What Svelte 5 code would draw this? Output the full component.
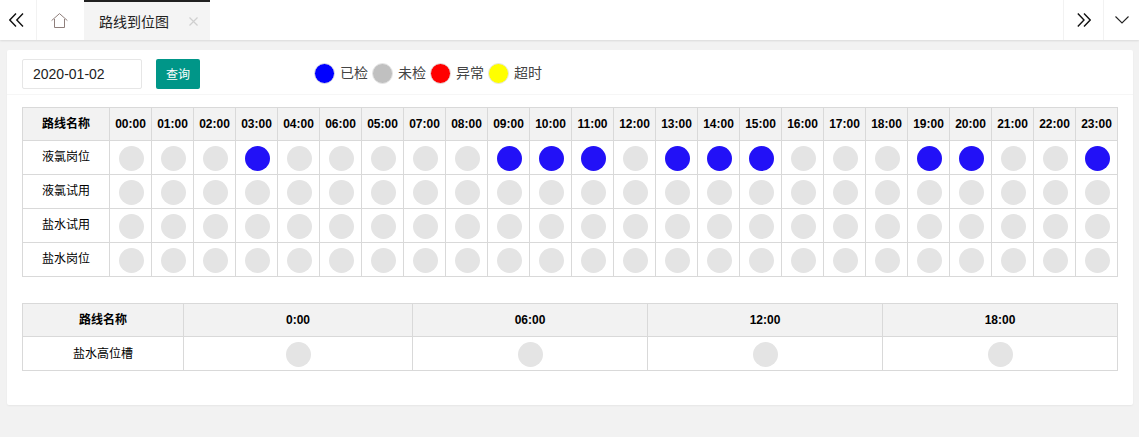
<script>
  const hours = ['00:00','01:00','02:00','03:00','04:00','06:00','05:00','07:00','08:00','09:00','10:00','11:00','12:00','13:00','14:00','15:00','16:00','17:00','18:00','19:00','20:00','21:00','22:00','23:00'];
  const checked = [3, 9, 10, 11, 13, 14, 15, 19, 20, 23];
  const routes = [
    { name: '液氯岗位', done: checked },
    { name: '液氯试用', done: [] },
    { name: '盐水试用', done: [] },
    { name: '盐水岗位', done: [] }
  ];
  const legend = [
    { label: '已检', color: '#0000ff' },
    { label: '未检', color: '#c0c0c0' },
    { label: '异常', color: '#ff0000' },
    { label: '超时', color: '#ffff00' }
  ];
  const shifts = ['0:00', '06:00', '12:00', '18:00'];
</script>

<div class="page">
  <header class="topbar">
    <button class="nav first" aria-label="向左">
      <svg width="15" height="14" viewBox="0 0 15 14"><path d="M7 0.5 L0.8 7 L7 13.5 M14 0.5 L7.8 7 L14 13.5" fill="none" stroke="#111" stroke-width="1.4"/></svg>
    </button>
    <button class="nav home" aria-label="首页">
      <svg width="17" height="15" viewBox="0 0 17 15"><path d="M0.6 7.6 L8.5 0.6 L16.4 7.6 M3.5 6 V14.5 H13.5 V6" fill="none" stroke="#8f7f7c" stroke-width="1"/></svg>
    </button>
    <div class="tab">
      <span>路线到位图</span>
      <svg width="9" height="9" viewBox="0 0 9 9"><path d="M0.5 0.5 L8.5 8.5 M8.5 0.5 L0.5 8.5" stroke="#cfcfcf" stroke-width="1.2"/></svg>
    </div>
    <div class="spacer"></div>
    <button class="nav right" aria-label="向右">
      <svg width="14" height="14" viewBox="0 0 14 14"><path d="M0.8 0.5 L7 7 L0.8 13.5 M7 0.5 L13.2 7 L7 13.5" fill="none" stroke="#111" stroke-width="1.4"/></svg>
    </button>
    <button class="nav more" aria-label="更多">
      <svg width="14" height="8" viewBox="0 0 14 8"><path d="M0.5 0.5 L7 7 L13.5 0.5" fill="none" stroke="#222" stroke-width="1.1"/></svg>
    </button>
  </header>

  <main class="card">
    <div class="toolbar">
      <input class="date" value="2020-01-02" />
      <button class="query">查询</button>
      <div class="legend">
        {#each legend as item}
          <i class="swatch" style="background: {item.color}"></i>
          <span>{item.label}</span>
        {/each}
      </div>
    </div>

    <div class="body">
      <table class="hours">
        <thead>
          <tr>
            <th class="name">路线名称</th>
            {#each hours as h}<th>{h}</th>{/each}
          </tr>
        </thead>
        <tbody>
          {#each routes as route}
            <tr>
              <td class="label">{route.name}</td>
              {#each hours as h, i}
                <td class="slot"><i class="dot" class:on={route.done.includes(i)}></i></td>
              {/each}
            </tr>
          {/each}
        </tbody>
      </table>

      <table class="shifts">
        <thead>
          <tr>
            <th class="s0">路线名称</th>
            <th class="s1">{shifts[0]}</th>
            <th class="s2">{shifts[1]}</th>
            <th class="s2">{shifts[2]}</th>
            <th>{shifts[3]}</th>
          </tr>
        </thead>
        <tbody>
          <tr>
            <td>盐水高位槽</td>
            {#each shifts as s}
              <td><i class="dot"></i></td>
            {/each}
          </tr>
        </tbody>
      </table>
    </div>
  </main>
</div>

<style>
  :global(body) {
    margin: 0;
    background: #f2f2f2;
    font-family: "Liberation Sans", "Noto Sans CJK SC", sans-serif;
    color: #000;
  }

  .page {
    height: 437px;
    overflow: hidden;
    background: #f2f2f2;
  }

  .topbar {
    display: flex;
    height: 40px;
    background: #fff;
    box-shadow: 0 1px 2px rgba(0, 0, 0, 0.1);
  }

  .nav {
    display: flex;
    align-items: center;
    justify-content: center;
    padding: 0;
    border: 0;
    background: #fff;
    height: 40px;
  }

  .first {
    width: 37px;
    border-right: 1px solid #f2f2f2;
    padding-right: 3px;
  }

  .home {
    width: 47px;
    padding-right: 2px;
  }

  .tab {
    display: flex;
    align-items: center;
    box-sizing: border-box;
    width: 126px;
    height: 40px;
    padding: 0 12px 0 15px;
    justify-content: space-between;
    background: #f4f4f4;
    border-top: 2px solid #202020;
    font-size: 14px;
    color: #222;
  }

  .spacer {
    flex: 1;
  }

  .right {
    width: 40px;
    border-left: 1px solid #f2f2f2;
  }

  .more {
    width: 36px;
    border-left: 1px solid #f2f2f2;
  }

  .card {
    box-sizing: border-box;
    height: 355px;
    margin: 10px 6px 0 7px;
    background: #fff;
    border-radius: 2px;
    box-shadow: 0 1px 2px rgba(0, 0, 0, 0.05);
  }

  .toolbar {
    display: flex;
    align-items: center;
    box-sizing: border-box;
    height: 45px;
    padding: 3px 15px 0;
    border-bottom: 1px solid #f6f6f6;
  }

  .date {
    box-sizing: border-box;
    width: 120px;
    height: 30px;
    padding: 0 10px;
    border: 1px solid #e6e6e6;
    border-radius: 2px;
    font: 14px "Liberation Sans", "Noto Sans CJK SC", sans-serif;
    color: #222;
    outline: none;
  }

  .query {
    width: 44px;
    height: 30px;
    margin-left: 14px;
    padding: 0;
    border: 0;
    border-radius: 2px;
    background: #009688;
    color: #fff;
    font: 12px "Liberation Sans", "Noto Sans CJK SC", sans-serif;
  }

  .legend {
    display: flex;
    align-items: center;
    margin: 0 0 1px 114px;
    font-size: 14px;
    line-height: 20px;
    color: #444;
  }

  .legend span {
    margin: 0 4px 1px 5px;
  }

  .swatch {
    display: block;
    box-sizing: border-box;
    width: 21px;
    height: 21px;
    border-radius: 50%;
    border: 1px solid #e6e6e6;
  }

  .body {
    padding: 12px 15px 0;
  }

  table {
    width: 1096px;
    border-collapse: collapse;
    table-layout: fixed;
    font-size: 12px;
    text-align: center;
  }

  th, td {
    padding: 0;
    border: 1px solid #d9d9d9;
    line-height: 16px;
  }

  th {
    height: 32px;
    background: #f2f2f2;
    font-weight: 700;
  }

  td {
    height: 33px;
  }

  .hours th {
    width: 41px;
  }

  .hours th.name {
    width: 86px;
  }

  .label {
    padding-bottom: 2px;
    height: 31px;
  }

  .slot {
    padding-left: 2px;
  }

  .shifts {
    margin-top: 26px;
  }

  .s0 {
    width: 160px;
  }

  .s1 {
    width: 228px;
  }

  .s2 {
    width: 234px;
  }

  .dot {
    display: block;
    width: 25px;
    height: 25px;
    margin: 1px auto 0;
    border-radius: 50%;
    background: #e4e4e4;
  }

  .dot.on {
    background: #2211f7;
  }
</style>
